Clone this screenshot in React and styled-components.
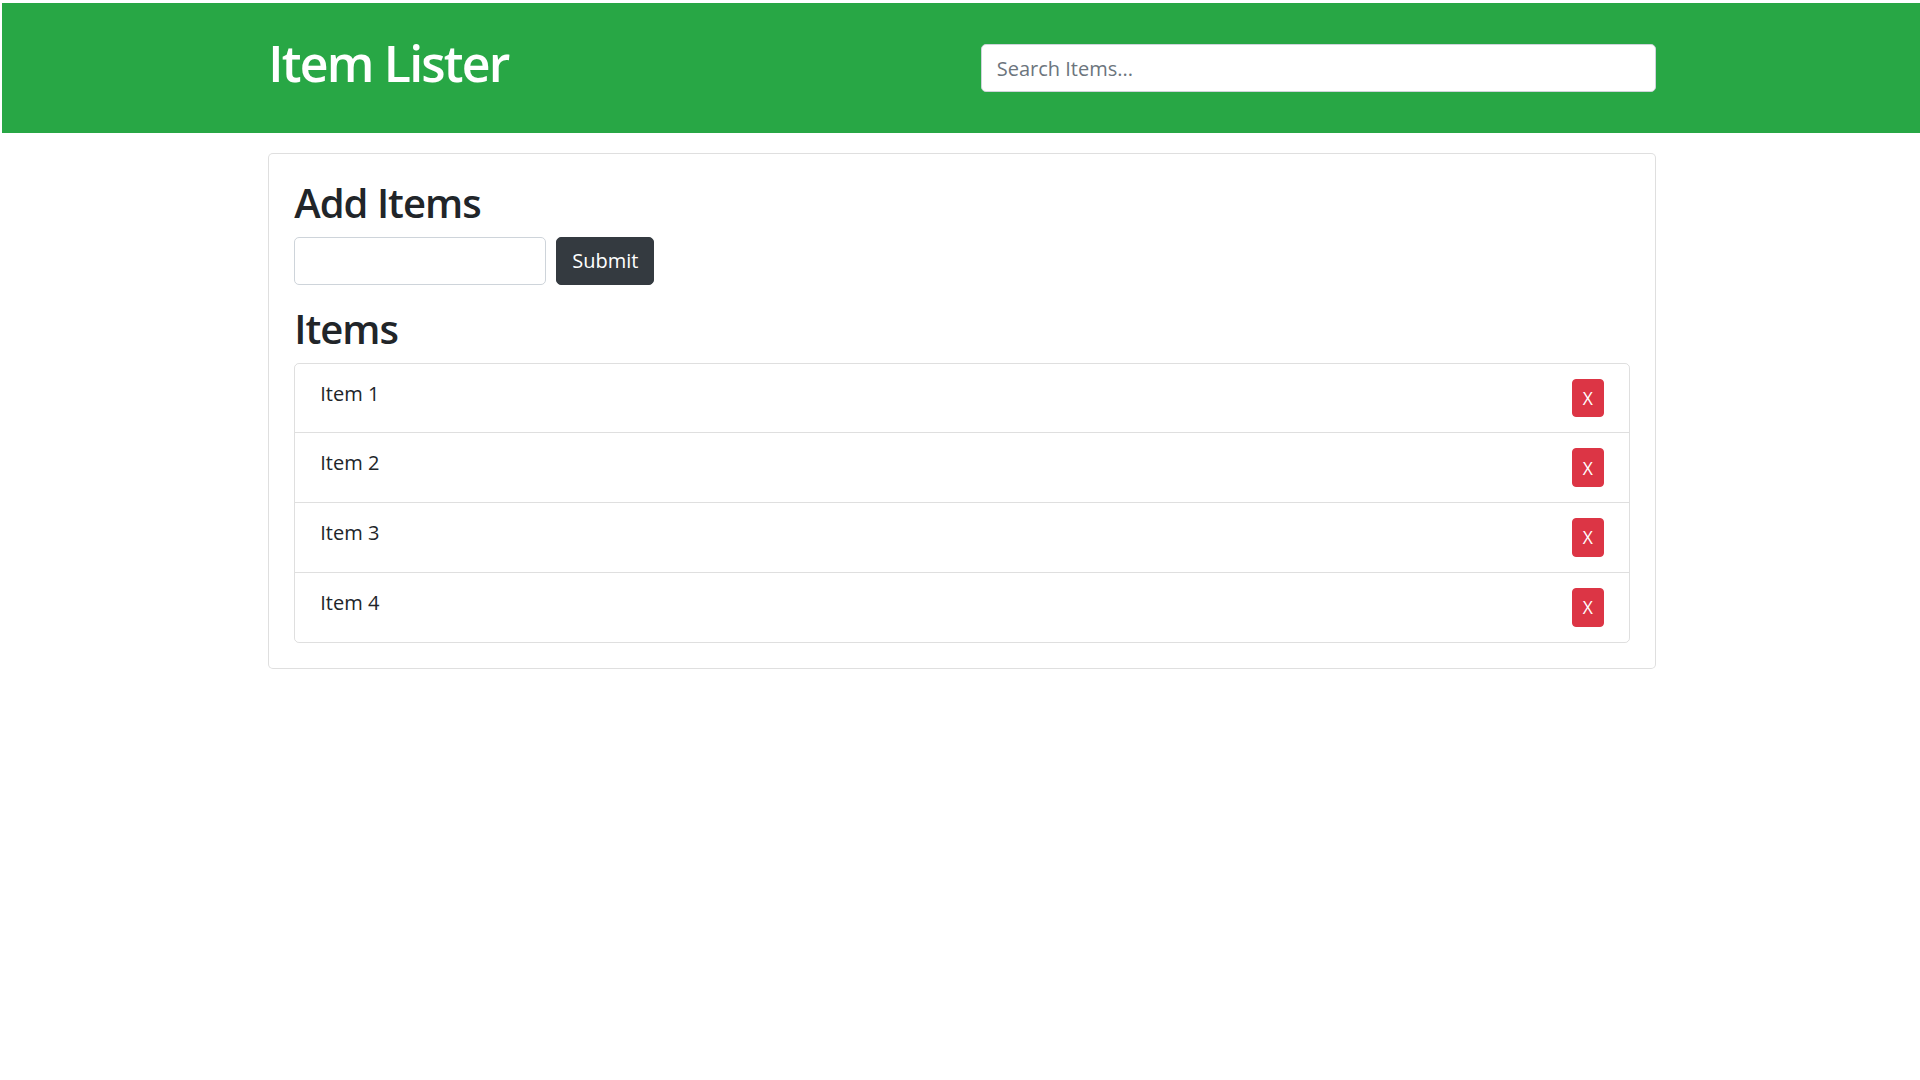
import React, { useState } from 'react';
import styled, { createGlobalStyle } from 'styled-components';

const GlobalStyle = createGlobalStyle`
  * {
    box-sizing: border-box;
  }
  body {
    margin: 3px 0 0 2px;
    background: #fff;
    color: #212529;
    font-family: "Open Sans", "Noto Sans", "Liberation Sans", sans-serif;
    font-size: 20px;
    line-height: 1.5;
  }
`;

const Header = styled.header`
  background: #28a745;
  color: #fff;
  padding: 30px 0;
  margin-bottom: 20px;
`;

const Container = styled.div`
  max-width: 1425px;
  margin: 0 auto;
  padding: 0 17.75px 0 19.75px;
`;

const HeaderRow = styled.div`
  display: grid;
  grid-template-columns: 1fr 1fr;
  column-gap: 37.5px;
  align-items: center;
`;

const Title = styled.h1`
  margin: 0 0 10px;
  font-size: 50px;
  font-weight: 600;
  letter-spacing: -1.8px;
  line-height: 1.2;
`;

const SearchBox = styled.input`
  display: block;
  width: 100%;
  height: 47.5px;
  padding: 7.5px 15px;
  font-family: inherit;
  font-size: 20px;
  color: #495057;
  background: #fff;
  border: 1px solid #ced4da;
  border-radius: 5px;
  outline: none;

  &::placeholder {
    color: #6c757d;
  }
`;

const Card = styled.div`
  display: flex;
  flex-direction: column;
  padding: 25px;
  border: 1px solid rgba(0, 0, 0, 0.125);
  border-radius: 5px;
  background: #fff;
`;

const SectionTitle = styled.h2`
  margin: 0 0 10px;
  font-size: 40px;
  font-weight: 600;
  letter-spacing: -1px;
  line-height: 1.2;
`;

const AddForm = styled.form`
  display: flex;
  align-items: center;
  gap: 10px;
  margin-bottom: 20px;
`;

const ItemInput = styled(SearchBox)`
  width: 252px;
`;

const SubmitButton = styled.button`
  height: 47.5px;
  padding: 7.5px 15px;
  font-family: inherit;
  font-size: 20px;
  line-height: 1.5;
  color: #fff;
  background: #343a40;
  border: 1px solid #343a40;
  border-radius: 5px;
  cursor: pointer;
`;

const List = styled.ul`
  display: flex;
  flex-direction: column;
  margin: 0;
  padding: 0;
  list-style: none;
  border: 1px solid rgba(0, 0, 0, 0.125);
  border-radius: 5px;
`;

const Row = styled.li`
  display: flex;
  justify-content: space-between;
  align-items: flex-start;
  padding: 15px 25px;
  border-top: ${(p) => (p.first ? 'none' : '1px solid rgba(0, 0, 0, 0.125)')};
  line-height: 30px;
`;

const DeleteButton = styled.button`
  height: 38.75px;
  padding: 5px 10px;
  font-family: inherit;
  font-size: 17.5px;
  line-height: 1.5;
  color: #fff;
  background: #dc3545;
  border: 1px solid #dc3545;
  border-radius: 4px;
  cursor: pointer;
`;

export default function App() {
  const [items, setItems] = useState(['Item 1', 'Item 2', 'Item 3', 'Item 4']);
  const [text, setText] = useState('');
  const [filter, setFilter] = useState('');

  const submit = (e) => {
    e.preventDefault();
    if (!text.trim()) return;
    setItems([...items, text.trim()]);
    setText('');
  };

  const shown = items.filter((i) => i.toLowerCase().includes(filter.toLowerCase()));

  return (
    <>
      <GlobalStyle />
      <Header>
        <Container>
          <HeaderRow>
            <Title>Item Lister</Title>
            <SearchBox
              type="text"
              placeholder="Search Items..."
              value={filter}
              onChange={(e) => setFilter(e.target.value)}
            />
          </HeaderRow>
        </Container>
      </Header>
      <Container>
        <Card>
          <SectionTitle>Add Items</SectionTitle>
          <AddForm onSubmit={submit}>
            <ItemInput type="text" value={text} onChange={(e) => setText(e.target.value)} />
            <SubmitButton type="submit">Submit</SubmitButton>
          </AddForm>
          <SectionTitle>Items</SectionTitle>
          <List>
            {shown.map((item, i) => (
              <Row key={item + i} first={i === 0}>
                {item}
                <DeleteButton onClick={() => setItems(items.filter((x) => x !== item))}>X</DeleteButton>
              </Row>
            ))}
          </List>
        </Card>
      </Container>
    </>
  );
}
